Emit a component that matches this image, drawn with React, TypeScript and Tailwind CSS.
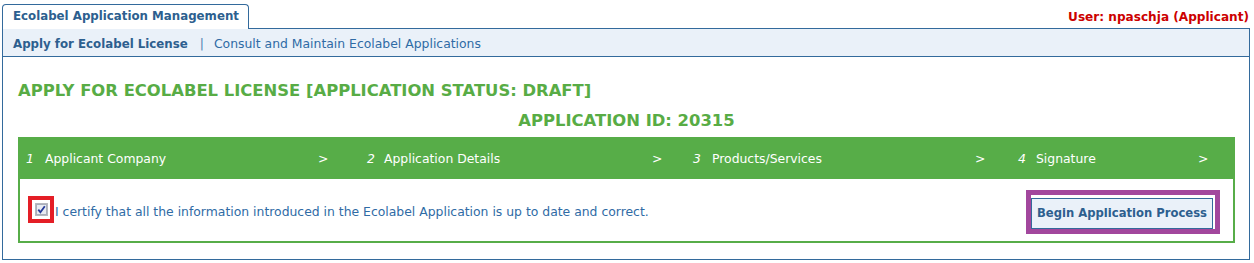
import React from "react";

const steps = [
  { n: "1", label: "Applicant Company", w: "w-[341px]", numW: "w-[19px]", labW: "w-[273px]" },
  { n: "2", label: "Application Details", w: "w-[326px]", numW: "w-[17px]", labW: "w-[268px]" },
  { n: "3", label: "Products/Services", w: "w-[325px]", numW: "w-[19px]", labW: "w-[263px]" },
  { n: "4", label: "Signature", w: "flex-1", numW: "w-[18px]", labW: "w-[162px]" },
];

export default function App() {
  return (
    <div className="w-[1254px] h-[263px] bg-white pl-[2px] pr-[4px] font-['DejaVu_Sans',sans-serif]">
      {/* tab row */}
      <div className="flex h-[29px] items-end">
        <div className="h-[25px] w-[247px] rounded-t-[4px] border border-b-0 border-[#336a9c] bg-white pl-[10px] text-[11.8px] font-bold leading-[22px] text-[#2d5f8f]">
          Ecolabel Application Management
        </div>
        <div className="flex h-[29px] flex-1 items-start justify-end border-b border-[#336a9c] pt-[9px] pr-[1px] text-[12.1px] font-bold leading-[16px] text-[#cc0000]">
          User: npaschja (Applicant)
        </div>
      </div>
      {/* nav */}
      <div className="flex h-[28px] items-center border border-t-0 border-[#336a9c] bg-[#eaf1f9] pl-[10px] pt-[2px] leading-[16px]">
        <span className="text-[11.8px] font-bold text-[#2d5f8f]">Apply for Ecolabel License</span>
        <span className="ml-[12px] mr-[10px] text-[12.4px] text-[#4a7db0]">|</span>
        <span className="text-[12.4px] text-[#2f6ba5]">Consult and Maintain Ecolabel Applications</span>
      </div>
      {/* content */}
      <div className="border border-t-0 border-[#336a9c] pl-[15px] pr-[14px] pt-[24px] pb-[16px]">
        <div className="text-[16.4px] font-bold leading-[20px] text-[#58ac45]">
          APPLY FOR ECOLABEL LICENSE [APPLICATION STATUS: DRAFT]
        </div>
        <div className="mt-[10px] text-center text-[16.4px] font-bold leading-[20px] text-[#58ac45]">
          APPLICATION ID: 20315
        </div>
        <div className="mt-[6px] border-2 border-[#57ad48]">
          <div className="flex h-[40px] items-center bg-[#57ad48] pl-[6px] pb-[1px] text-[12.4px] leading-[16px] text-white">
            {steps.map((s) => (
              <div key={s.n} className={`flex ${s.w}`}>
                <span className={`${s.numW} italic`}>{s.n}</span>
                <span className={s.labW}>{s.label}</span>
                <span>&gt;</span>
              </div>
            ))}
          </div>
          <div className="flex h-[62px] items-center pl-[8px] pr-[13px] pt-[3px]">
            <div className="mb-[4px] flex h-[27px] w-[26px] items-center justify-center border-[4px] border-[#e41e26] bg-white">
              <svg width="13" height="13" viewBox="0 0 13 13">
                <rect x="0.5" y="0.5" width="12" height="12" fill="#dfe3ec" stroke="#7c7f88" strokeDasharray="1 1" />
                <rect x="1.5" y="1.5" width="10" height="10" fill="#e8ebf2" stroke="#a9aebb" />
                <path d="M3.3 6.6 L5.4 9.2 L9.8 3.2" fill="none" stroke="#24399a" strokeWidth="1.8" />
              </svg>
            </div>
            <span className="ml-[1px] text-[12.4px] leading-[16px] text-[#2f6ba5]">
              I certify that all the information introduced in the Ecolabel Application is up to date and correct.
            </span>
            <div className="ml-auto border-[5px] border-[#a2479d] bg-white pt-[3px] pb-[0px] pl-[0px] pr-[2px]">
              <button className="h-[31px] border border-[#336a9c] bg-[#eaf1f9] px-[5px] text-[11.6px] font-bold leading-[16px] text-[#2d5f8f]">
                Begin Application Process
              </button>
            </div>
          </div>
        </div>
      </div>
    </div>
  );
}
